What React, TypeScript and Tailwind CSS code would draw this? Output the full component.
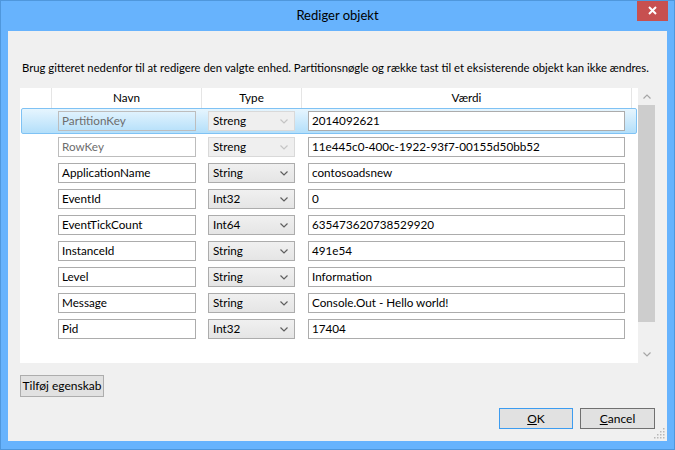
import React from 'react';

interface Row {
  name: string;
  type: string;
  value: string;
  locked?: boolean;
  selected?: boolean;
}

const rows: Row[] = [
  { name: 'PartitionKey', type: 'Streng', value: '2014092621', locked: true, selected: true },
  { name: 'RowKey', type: 'Streng', value: '11e445c0-400c-1922-93f7-00155d50bb52', locked: true },
  { name: 'ApplicationName', type: 'String', value: 'contosoadsnew' },
  { name: 'EventId', type: 'Int32', value: '0' },
  { name: 'EventTickCount', type: 'Int64', value: '635473620738529920' },
  { name: 'InstanceId', type: 'String', value: '491e54' },
  { name: 'Level', type: 'String', value: 'Information' },
  { name: 'Message', type: 'String', value: 'Console.Out - Hello world!' },
  { name: 'Pid', type: 'Int32', value: '17404' },
];

const Chevron = ({ up = false, color = '#5f5f5f' }: { up?: boolean; color?: string }) => (
  <svg width="8" height="5" viewBox="0 0 8 5">
    <polyline
      points={up ? '0.5,4.5 4,1 7.5,4.5' : '0.5,0.5 4,4 7.5,0.5'}
      fill="none"
      stroke={color}
      strokeWidth="1.2"
    />
  </svg>
);

const GridRow = ({ row }: { row: Row }) => (
  <div
    className={`ml-[1px] w-[616px] h-[26px] flex items-center pl-[36px] border rounded-[2px] ${
      row.selected ? 'border-[#7fc2f4] bg-gradient-to-b from-[#e6f5fe] to-[#b3dffa]' : 'border-transparent'
    }`}
  >
    {/* name */}
    <div
      className={`w-[138px] h-[20px] flex items-center px-[3px] border ${
        row.locked ? 'border-[#bdbdbd] text-[#6d6d6d] bg-transparent' : 'border-[#acacac] bg-white text-black'
      }`}
    >
      {row.name}
    </div>
    {/* type */}
    <div
      className={`ml-[12px] w-[87px] h-[20px] flex items-center justify-between pl-[4px] pr-[6px] border ${
        row.locked ? 'border-[#d9d9d9] bg-[#efefef]' : 'border-[#acacac] bg-gradient-to-b from-[#f0f0f0] to-[#e5e5e5]'
      }`}
    >
      <span>{row.type}</span>
      <Chevron color={row.locked ? '#c4c4c4' : '#5f5f5f'} />
    </div>
    {/* value */}
    <div className="ml-[13px] w-[317px] h-[20px] flex items-center px-[3px] border border-[#acacac] bg-white">
      {row.value}
    </div>
  </div>
);

export default function App() {
  return (
    <div className="w-[675px] h-[450px] bg-[#67b3fd] border border-[#4f97dc] flex flex-col font-['Lato',sans-serif] text-[12px] text-black relative overflow-hidden">
      {/* title bar */}
      <div className="h-[30px] flex items-center justify-center relative">
        <span className="text-[13px] -mt-[1px]">Rediger objekt</span>
        <div className="absolute top-[-1px] right-[6px] w-[31px] h-[21px] bg-[#c75050] flex items-center justify-center">
          <svg width="9" height="9" viewBox="0 0 9 9">
            <path d="M1 1 L8 8 M8 1 L1 8" stroke="#fff" strokeWidth="2" />
          </svg>
        </div>
      </div>

      {/* client area */}
      <div className="flex-1 mx-[7px] mb-[8px] bg-[#f0f0f0] flex flex-col relative">
        <p className="mt-[29px] ml-[14px] h-[16px] leading-[16px] text-[11.3px] whitespace-nowrap">
          Brug gitteret nedenfor til at redigere den valgte enhed. Partitionsnøgle og række tast til et eksisterende objekt kan ikke ændres.
        </p>

        {/* grid */}
        <div className="mt-[12px] ml-[12px] w-[635px] h-[275px] flex text-[11.7px]">
          <div className="w-[618px] bg-white flex flex-col">
            <div className="h-[20px] flex">
              <div className="w-[32px] border-r border-[#e5e5e5]" />
              <div className="w-[150px] border-r border-[#e5e5e5] flex items-center justify-center">Navn</div>
              <div className="w-[100px] border-r border-[#e5e5e5] flex items-center justify-center">Type</div>
              <div className="w-[330px] border-r border-[#e5e5e5] flex items-center justify-center">Værdi</div>
            </div>
            {rows.map((r) => (
              <GridRow key={r.name} row={r} />
            ))}
          </div>
          {/* scrollbar */}
          <div className="w-[17px] flex flex-col">
            <div className="h-[17px] flex items-center justify-center">
              <Chevron up color="#a6a6a6" />
            </div>
            <div className="h-[217px] bg-[#cdcdcd]" />
            <div className="flex-1" />
            <div className="h-[17px] flex items-center justify-center">
              <Chevron color="#a6a6a6" />
            </div>
          </div>
        </div>

        <div className="mt-[12px] ml-[12px]">
          <button className="w-[84px] h-[22px] bg-[#e1e1e1] border border-[#adadad] flex items-center justify-center whitespace-nowrap">
            Tilføj egenskab
          </button>
        </div>

        <div className="mt-[11px] mr-[12px] flex justify-end gap-[7px]">
          <button className="w-[74px] h-[21px] bg-[#e1e1e1] border border-[#3d9cf0] flex items-center justify-center">
            <span>
              <span className="underline">O</span>K
            </span>
          </button>
          <button className="w-[75px] h-[21px] bg-[#e1e1e1] border border-[#707070] flex items-center justify-center">
            <span>
              <span className="underline">C</span>ancel
            </span>
          </button>
        </div>

        {/* resize grip */}
        <svg className="absolute right-[2px] bottom-[2px]" width="11" height="11" viewBox="0 0 11 11">
          {[
            [9, 1], [9, 4], [6, 4], [9, 7], [6, 7], [3, 7], [9, 10], [6, 10], [3, 10], [0, 10],
          ].map(([x, y], i) => (
            <rect key={i} x={x} y={y - 1} width="1.5" height="1.5" fill="#b8b8b8" />
          ))}
        </svg>
      </div>
    </div>
  );
}
